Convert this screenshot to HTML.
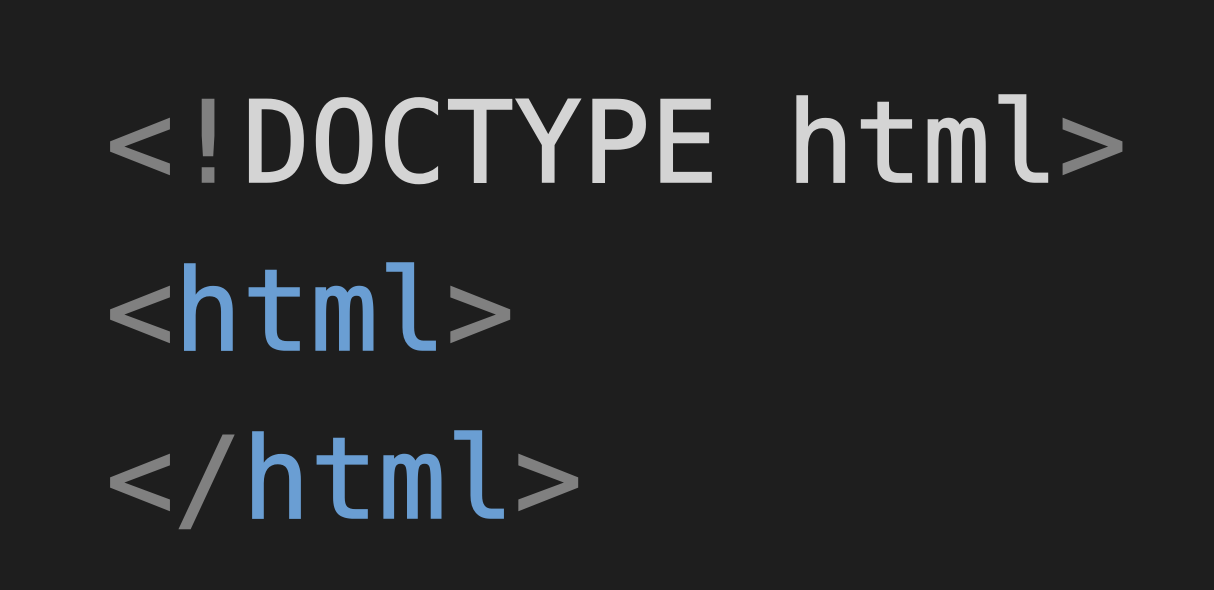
<!DOCTYPE html>
<html><head><style>
html,body{margin:0;padding:0;background:#1e1e1e;width:1214px;height:590px;overflow:hidden}
svg{display:block}
text{font-family:"DejaVu Sans Mono","Liberation Mono",monospace;font-size:113px}
</style></head><body>
<svg width="1214" height="590" viewBox="0 0 1214 590">
<rect width="1214" height="590" fill="#1e1e1e"/>
<g stroke-width="1.5">
<text x="106" y="182" xml:space="preserve"><tspan fill="#808080" stroke="#808080">&lt;!</tspan><tspan fill="#d4d4d4" stroke="#d4d4d4">DOCTYPE html</tspan><tspan fill="#808080" stroke="#808080">&gt;</tspan></text>
<text x="106" y="350"><tspan fill="#808080" stroke="#808080">&lt;</tspan><tspan fill="#6a9ed3" stroke="#6a9ed3">html</tspan><tspan fill="#808080" stroke="#808080">&gt;</tspan></text>
<text x="106" y="518"><tspan fill="#808080" stroke="#808080">&lt;/</tspan><tspan fill="#6a9ed3" stroke="#6a9ed3">html</tspan><tspan fill="#808080" stroke="#808080">&gt;</tspan></text>
</g>
</svg>
</body></html>
